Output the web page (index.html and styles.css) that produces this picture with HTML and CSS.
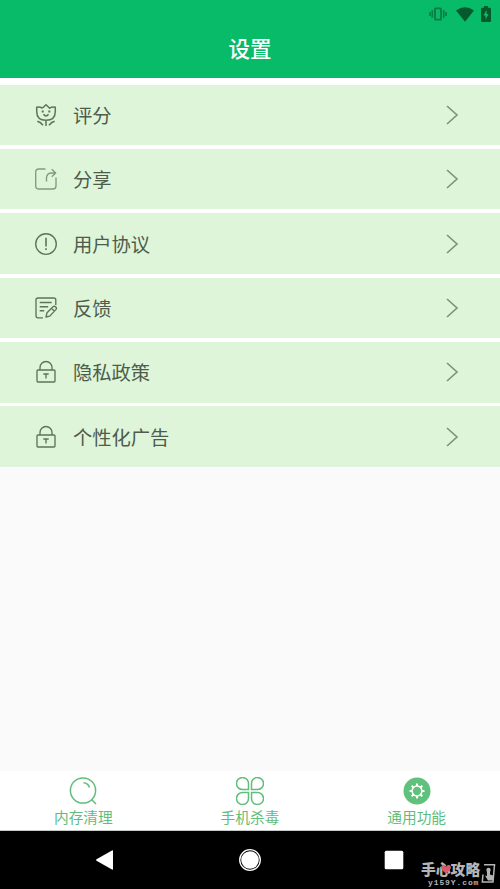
FILE: index.html
```html
<!DOCTYPE html>
<html lang="zh-CN">
<head>
<meta charset="utf-8">
<title>设置</title>
<link rel="stylesheet" href="styles.css">
</head>
<body>
<header class="header">
  <div class="status">
    <svg width="18" height="14" viewBox="0 0 18 14"><path d="M1 5v4M3.300 3.300v7.400M17 5v4M14.700 3.300v7.400" stroke="#087c43" stroke-width="1.600"/><rect x="6" y="1.300" width="6" height="11.400" rx=".7" fill="none" stroke="#087c43" stroke-width="1.800"/></svg>
    <svg class="wifi" width="18" height="15" viewBox="0 0 18 15"><path d="M0 3.500Q9-3 18 3.500L9 14.700Z" fill="#045a2c"/></svg>
    <svg class="battery" width="10" height="16" viewBox="0 0 10 16"><path d="M3 0h4v1.700h2q1 0 1 1V15q0 1-1 1H1q-1 0-1-1V2.700q0-1 1-1h2Z" fill="#045a2c"/><path d="M5.600 4v4h2L4.500 13.500V9.500h-2Z" fill="#18b868"/></svg>
  </div>
  <h1 class="title">设置</h1>
</header>
<main class="list">
  <div class="row">
    <svg class="icon flower" viewBox="0 0 24 24"><path d="M8.300 5.200 12 1.700l3.700 3.500Q18.500 3.200 21.300 4.300V8.500Q21.300 17.300 12 17.300T2.700 8.500V4.300Q5.500 3.200 8.300 5.200M12 17.300V23M3.300 18.300Q6.300 18.800 9 22.300M20.700 18.300Q17.700 18.800 15 22.300M9.500 11.300Q12 14.800 14.500 11.300"/><path d="M8.700 7.500v2M15.300 7.500v2" stroke-width="2"/></svg>
    <span class="label">评分</span><svg class="chevron" viewBox="0 0 14 22"><path d="m2 2 10 9L2 20"/></svg>
  </div>
  <div class="row">
    <svg class="icon light" viewBox="0 0 24 24"><path d="M11.500 2H5Q1.700 2 1.700 5v14Q1.700 22 5 22h14q3 0 3-3v-8.500M12.500 14.500V11Q12.500 6 18 6h3.500M17.700 2.300 21.700 6l-4 3.700"/></svg>
    <span class="label">分享</span><svg class="chevron" viewBox="0 0 14 22"><path d="m2 2 10 9L2 20"/></svg>
  </div>
  <div class="row">
    <svg class="icon" viewBox="0 0 24 24"><circle cx="12" cy="12" r="10.300"/><path d="M12 5.800v8.700M12 16.200v1.800" stroke-width="1.600"/></svg>
    <span class="label">用户协议</span><svg class="chevron" viewBox="0 0 14 22"><path d="m2 2 10 9L2 20"/></svg>
  </div>
  <div class="row">
    <svg class="icon" viewBox="0 0 24 24"><path d="M21.800 9V4Q21.800 2 19.800 2H4Q2 2 2 4v15.500Q2 21.800 4 21.800h5M5.700 6.500h12M5.700 10.700h8.500M5.700 14.700h4.500M12 21l1-4.300 6-6q1.500-1 2.800.2t0 2.700l-6 6.500Zm5.500-8.700 2.800 2.700"/></svg>
    <span class="label">反馈</span><svg class="chevron" viewBox="0 0 14 22"><path d="m2 2 10 9L2 20"/></svg>
  </div>
  <div class="row">
    <svg class="icon" viewBox="0 0 24 24"><rect x="3" y="10" width="18" height="12" rx="1"/><path d="M6 10V7.500a6 6 0 0 1 12 0V10M9.300 14h5.400M12 14v4.500"/></svg>
    <span class="label">隐私政策</span><svg class="chevron" viewBox="0 0 14 22"><path d="m2 2 10 9L2 20"/></svg>
  </div>
  <div class="row">
    <svg class="icon" viewBox="0 0 24 24"><rect x="3" y="10" width="18" height="12" rx="1"/><path d="M6 10V7.500a6 6 0 0 1 12 0V10M9.300 14h5.400M12 14v4.500"/></svg>
    <span class="label">个性化广告</span><svg class="chevron" viewBox="0 0 14 22"><path d="m2 2 10 9L2 20"/></svg>
  </div>
</main>
<nav class="tabs">
  <div class="tab">
    <svg viewBox="0 0 28 28"><circle cx="14" cy="13.500" r="12.600"/><path d="m22.500 22.500 4.500 4.500M14.500 5.700q4.500.3 6 4.800"/></svg>
    <span>内存清理</span>
  </div>
  <div class="tab">
    <svg viewBox="0 0 28 28"><path d="M12.500 12.500H6.700A6 6 0 1 1 12.500 6.700ZM15.500 12.500V6.700A6 6 0 1 1 21.300 12.500ZM12.500 15.500V21.300A6 6 0 1 1 6.700 15.500ZM15.500 15.500H21.300A6 6 0 1 1 15.500 21.300Z"/></svg>
    <span>手机杀毒</span>
  </div>
  <div class="tab">
    <svg viewBox="0 0 28 28"><circle cx="14" cy="14" r="13.500" fill="#5fc17c" stroke="none"/><g stroke="#fff"><circle cx="14" cy="14" r="4.900"/><path d="M14 9V6.500M14 19v2.500M9 14H6.500M19 14h2.500M10.500 10.500 8.700 8.700M17.500 10.500l1.800-1.800M10.500 17.500l-1.800 1.800M17.500 17.500l1.800 1.800" stroke-width="2"/></g></svg>
    <span>通用功能</span>
  </div>
</nav>
<footer class="system">
  <svg class="key" viewBox="0 0 24 24"><path d="M19 3v18q0 1-1 .500L2.500 12.700q-1-.7 0-1.400L18 2.500q1-.5 1 .5Z" fill="#fff"/></svg>
  <svg class="key" viewBox="0 0 24 24"><circle cx="12" cy="12" r="10.300" fill="none" stroke="#fff" stroke-width="1.300"/><circle cx="12" cy="12" r="8.800" fill="#fff"/></svg>
  <svg class="key" viewBox="0 0 24 24"><rect x="2.700" y="2.700" width="18.600" height="18.600" rx="1.500" fill="#fff"/></svg>
  <div class="mark">
    <div class="mark-text"><b>手心攻略</b><i>y159Y.com</i></div>
    <svg class="heart" viewBox="0 0 10 9"><path d="M5 8.500C-5 2 3-3 5 2 7-3 15 2 5 8.500Z" fill="#d65c66"/></svg>
    <svg class="phone" viewBox="0 0 15 20"><path d="M3 1.200h10.500L12 18.500H1.300L2 11" fill="none" stroke="#b5b5b5" stroke-width="1.500"/><circle cx="7.500" cy="6.500" r="2.200" fill="#b5b5b5"/><path d="M6 7h3v4l3 1v5H7l-3-5 2 .5Z" fill="#b5b5b5"/></svg>
  </div>
</footer>
</body>
</html>
```

FILE: styles.css
```css
* { box-sizing: border-box; }
body {
  margin: 0;
  width: 500px;
  height: 889px;
  display: flex;
  flex-direction: column;
  overflow: hidden;
  background: #fafafa;
  font-family: "Noto Sans CJK SC", sans-serif;
}
svg { display: block; flex: none; }
.header { height: 78.300px; background: #07bb69; }
.status {
  height: 28px;
  padding: 0 9px 0 0;
  display: flex;
  justify-content: flex-end;
  align-items: center;
}
.wifi { margin-left: 9px; }
.battery { margin-left: 7px; }
.title {
  margin: 0;
  height: 40px;
  line-height: 40px;
  font-size: 21.500px;
  font-weight: 500;
  text-align: center;
  color: #fff;
}
.list {
  background: #fff;
  padding-top: 6.300px;
  display: flex;
  flex-direction: column;
  gap: 3.800px;
}
.row {
  height: 60.550px;
  padding: 0 41px 0 33.500px;
  display: flex;
  align-items: center;
  background: #def5da;
}
.icon {
  width: 24px;
  height: 24px;
  fill: none;
  stroke: #5c745b;
  stroke-width: 1.350;
  stroke-linejoin: round;
}
.flower { stroke-width: 1.500; }
.light { stroke: #839a80; }
.label {
  flex: 1;
  margin-left: 15.500px;
  font-size: 19.300px;
  line-height: 28px;
  color: #4e5c4c;
}
.chevron {
  width: 14px;
  height: 22px;
  fill: none;
  stroke: #7e907a;
  stroke-width: 1.600;
}
.tabs {
  height: 59.500px;
  margin-top: auto;
  display: grid;
  grid-template-columns: repeat(3, 1fr);
  background: #fff;
  border-bottom: 1px solid #c5c9c6;
}
.tab {
  padding-top: 6px;
  display: flex;
  flex-direction: column;
  align-items: center;
  color: #61bd7b;
  font-size: 14.700px;
  line-height: 22px;
}
.tab svg {
  width: 28px;
  height: 28px;
  margin-bottom: 1px;
  fill: none;
  stroke: #61bd7b;
  stroke-width: 1.500;
}
.system {
  position: relative;
  height: 58.500px;
  padding: 0 94px;
  display: flex;
  justify-content: space-between;
  align-items: center;
  background: #000;
}
.key { width: 24px; height: 24px; }
.mark {
  position: absolute;
  right: 4px;
  bottom: 3px;
  display: flex;
  align-items: center;
  gap: 1px;
  color: #b5b5b5;
}
.mark-text { width: 59px; }
.mark b {
  display: block;
  font-size: 14.800px;
  line-height: 15px;
  font-weight: 900;
  white-space: nowrap;
}
.mark i {
  display: block;
  margin: 3px 0 0 7px;
  font: bold 8px/7px "Liberation Mono", monospace;
  letter-spacing: .9px;
}
.heart {
  position: absolute;
  left: 20px;
  top: 4px;
  width: 10px;
  height: 9px;
}
.phone { width: 15px; height: 21px; }
```
